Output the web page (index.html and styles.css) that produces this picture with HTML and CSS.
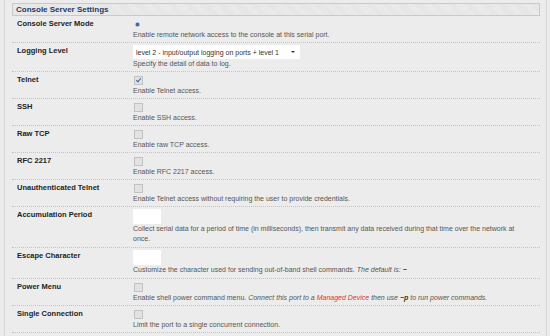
FILE: index.html
```html
<!DOCTYPE html>
<html>
<head>
    <title>Serial Port Settings</title>
    <link rel="stylesheet" href="styles.css">
</head>
<body>
    <div class="page">
        <div class="section-title">Console Server Settings</div>

        <div class="row">
            <div class="label">Console Server Mode</div>
            <div class="field">
                <div class="control"><span class="radio"></span></div>
                <div class="desc">Enable remote network access to the console at this serial port.</div>
            </div>
        </div>

        <div class="row">
            <div class="label">Logging Level</div>
            <div class="field">
                <div class="control boxed"><span class="select">level 2 - input/output logging on ports + level 1<span class="arrow"></span></span></div>
                <div class="desc">Specify the detail of data to log.</div>
            </div>
        </div>

        <div class="row">
            <div class="label">Telnet</div>
            <div class="field">
                <div class="control"><span class="check checked"></span></div>
                <div class="desc">Enable Telnet access.</div>
            </div>
        </div>

        <div class="row">
            <div class="label">SSH</div>
            <div class="field">
                <div class="control"><span class="check"></span></div>
                <div class="desc">Enable SSH access.</div>
            </div>
        </div>

        <div class="row">
            <div class="label">Raw TCP</div>
            <div class="field">
                <div class="control"><span class="check"></span></div>
                <div class="desc">Enable raw TCP access.</div>
            </div>
        </div>

        <div class="row">
            <div class="label">RFC 2217</div>
            <div class="field">
                <div class="control"><span class="check"></span></div>
                <div class="desc">Enable RFC 2217 access.</div>
            </div>
        </div>

        <div class="row">
            <div class="label">Unauthenticated Telnet</div>
            <div class="field">
                <div class="control"><span class="check"></span></div>
                <div class="desc">Enable Telnet access without requiring the user to provide credentials.</div>
            </div>
        </div>

        <div class="row input-row">
            <div class="label">Accumulation Period</div>
            <div class="field">
                <div class="control boxed"><span class="text-input"></span></div>
                <div class="desc wrap">Collect serial data for a period of time (in milliseconds), then transmit any data received during that time over the network at once.</div>
            </div>
        </div>

        <div class="row input-row">
            <div class="label">Escape Character</div>
            <div class="field">
                <div class="control boxed"><span class="text-input"></span></div>
                <div class="desc">Customize the character used for sending out-of-band shell commands. <i>The default is: <b>~</b></i></div>
            </div>
        </div>

        <div class="row">
            <div class="label">Power Menu</div>
            <div class="field">
                <div class="control"><span class="check"></span></div>
                <div class="desc">Enable shell power command menu. <i>Connect this port to a <span class="red">Managed Device</span> then use <b>~p</b> to run power commands.</i></div>
            </div>
        </div>

        <div class="row">
            <div class="label">Single Connection</div>
            <div class="field">
                <div class="control"><span class="check"></span></div>
                <div class="desc">Limit the port to a single concurrent connection.</div>
            </div>
        </div>
    </div>
</body>
</html>
```

FILE: styles.css
```css
body {
    margin: 0;
    background-color: #ececec;
    font-family: "Liberation Sans", Arial, sans-serif;
    color: #333;
}
.page {
    margin: 0 3px 0 4px;
    padding: 3px 6px 0 7px;
    border-left: 1px solid #d6d6d6;
    border-right: 1px solid #d6d6d6;
    min-height: 336px;
    box-sizing: border-box;
}
.section-title {
    height: 11px;
    line-height: 11px;
    padding-left: 3px;
    border: 1px solid #c9c9c9;
    background: repeating-linear-gradient(45deg, #e4e4e4 0 1px, #ececec 1px 2px);
    color: #1c3a68;
    font-size: 8px;
    font-weight: bold;
}
.row {
    display: flex;
    padding: 2px 0 2px 5px;
    border-bottom: 1px dotted #c4c4c4;
}
.row.input-row {
    padding-bottom: 3px;
}
.label {
    width: 116px;
    flex-shrink: 0;
    padding-top: 1px;
    font-size: 7.5px;
    font-weight: bold;
    color: #222;
    line-height: 10px;
}
.field {
    flex: 1;
    min-width: 0;
}
.control {
    height: 12px;
    display: flex;
    align-items: center;
}
.control.boxed {
    height: auto;
}
.desc {
    font-size: 7px;
    line-height: 10px;
    color: #555;
}
.desc.wrap {
    padding-right: 20px;
}
.desc b {
    color: #333;
}
.red {
    color: #e0312f;
}
.radio {
    width: 5px;
    height: 5px;
    margin-left: 2px;
    border-radius: 50%;
    background: radial-gradient(circle, #3d6fa8 0 40%, #b8c4d2 60%);
}
.check {
    width: 7px;
    height: 7px;
    margin-left: 1px;
    border: 1px solid #c2c2c2;
    background: #e2e2e2;
    position: relative;
}
.check.checked::after {
    content: "";
    position: absolute;
    left: 2px;
    top: 0;
    width: 2px;
    height: 4px;
    border-right: 1px solid #3a64b0;
    border-bottom: 1px solid #3a64b0;
    transform: rotate(40deg);
}
.select {
    display: flex;
    align-items: center;
    width: 164px;
    height: 14px;
    padding-left: 3px;
    background: #fff;
    font-size: 7px;
    color: #333;
    position: relative;
}
.arrow {
    position: absolute;
    right: 5px;
    top: 6px;
    border-left: 2px solid transparent;
    border-right: 2px solid transparent;
    border-top: 2px solid #333;
}
.text-input {
    display: block;
    width: 28px;
    height: 15px;
    background: #fff;
}
```
